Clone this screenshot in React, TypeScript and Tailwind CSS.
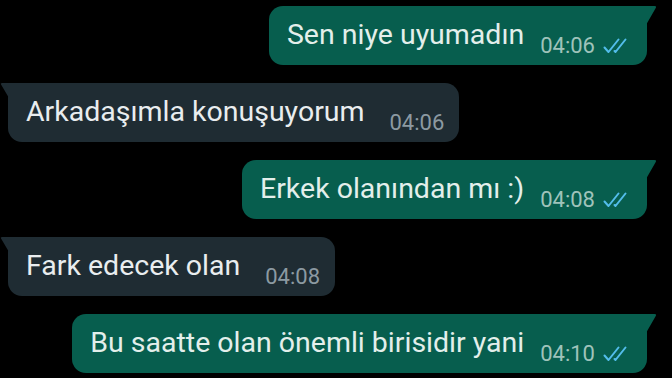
import clsx from "clsx"

type Msg = { text: string; time: string; out: boolean }

const messages: Msg[] = [
   { text: "Sen niye uyumadın", time: "04:06", out: true },
   { text: "Arkadaşımla konuşuyorum", time: "04:06", out: false },
   { text: "Erkek olanından mı :)", time: "04:08", out: true },
   { text: "Fark edecek olan", time: "04:08", out: false },
   { text: "Bu saatte olan önemli birisidir yani", time: "04:10", out: true },
]

// double blue tick
const Ticks = () => (
   <svg width="25" height="17" viewBox="0 0 25 17" className="ml-[8px] mt-[31px] shrink-0">
      <path
         d="M1.5 10.5 L5.5 15 L15.5 2.5 M11.5 14 L12.5 15 L22.5 2.5"
         fill="none"
         stroke="#53bdeb"
         strokeWidth="2"
         strokeLinecap="round"
         strokeLinejoin="round"
      />
   </svg>
)

const Bubble = ({ msg }: { msg: Msg }) => {
   return (
      <div className={clsx("flex", msg.out ? "justify-end pr-[25px]" : "justify-start pl-[8px]")}>
         <div
            className={clsx(
               "relative flex items-start h-[59px] rounded-[14px]",
               msg.out
                  ? "bg-[#075e4e] rounded-tr-none pl-[18px] pr-[19px]"
                  : "bg-[#1f2c33] rounded-tl-none pl-[18px] pr-[15px]"
            )}
         >
            {/* tail */}
            {msg.out ? (
               <svg width="11" height="20" viewBox="0 0 11 20" className="absolute top-0 -right-[10px]">
                  <path d="M0 0 H8.5 Q11 0 9.6 2.2 L0 19 Z" fill="#075e4e" />
               </svg>
            ) : (
               <svg width="9" height="16" viewBox="0 0 9 16" className="absolute top-0 -left-[8px]">
                  <path d="M9 0 H2 Q0 0 1.2 1.8 L9 15 Z" fill="#1f2c33" />
               </svg>
            )}
            <span
               className={clsx(
                  "pt-[14px] text-[28.5px] leading-[30px] whitespace-nowrap",
                  msg.out ? "text-[#e3efeb]" : "text-[#e9edef]"
               )}
            >
               {msg.text}
            </span>
            <span
               className={clsx(
                  "mt-[28px] text-[22px] leading-[24px] whitespace-nowrap",
                  msg.out ? "ml-[16px] text-[#9fc3bb]" : "ml-[25px] text-[#8c9aa2]"
               )}
            >
               {msg.time}
            </span>
            {msg.out && <Ticks />}
         </div>
      </div>
   )
}

export default function App() {
   return (
      <div
         className="w-[672px] h-[378px] bg-black overflow-hidden flex flex-col gap-[18px] pt-[6px]"
         style={{ fontFamily: "Roboto, 'Noto Sans', sans-serif" }}
      >
         {messages.map((m, i) => (
            <Bubble key={i} msg={m} />
         ))}
      </div>
   )
}
